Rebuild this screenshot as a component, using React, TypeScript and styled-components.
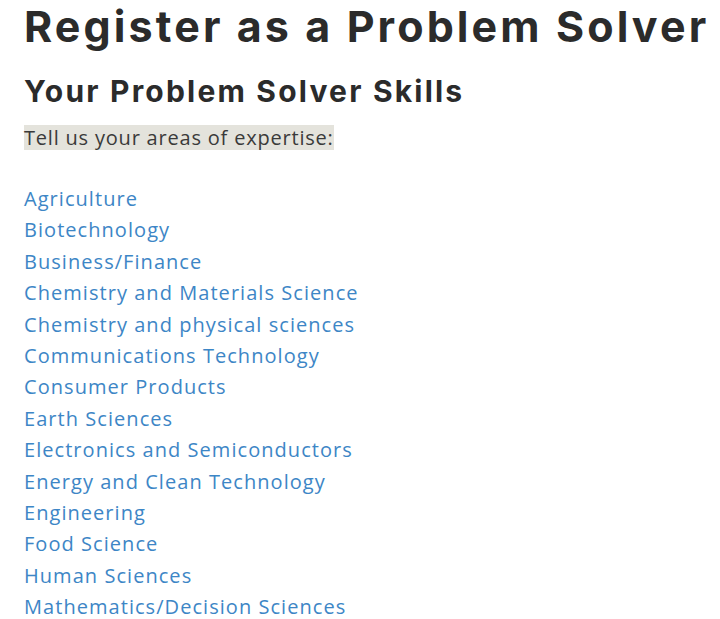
import styled, { createGlobalStyle } from "styled-components";

const GlobalStyle = createGlobalStyle`
  html, body {
    margin: 0;
    padding: 0;
    background: #ffffff;
  }
`;

const Page = styled.div`
  padding: 0 0 0 24px;
  font-family: "Open Sans", "Liberation Sans", sans-serif;
`;

const Title = styled.h1`
  margin: 0;
  font-family: Inter, "Liberation Sans", sans-serif;
  font-weight: 700;
  font-size: 43px;
  line-height: 52px;
  letter-spacing: 3.1px;
  color: #2b2b2b;
  white-space: nowrap;
`;

const SubTitle = styled.h2`
  margin: 21px 0 0;
  font-family: Inter, "Liberation Sans", sans-serif;
  font-weight: 700;
  font-size: 30px;
  line-height: 36px;
  letter-spacing: 2.2px;
  color: #2b2b2b;
`;

const Intro = styled.p`
  width: fit-content;
  margin: 16px 0 0;
  font-size: 20px;
  line-height: 25px;
  letter-spacing: 0.8px;
  background: #e4e3dc;
  color: #3a3a3a;
`;

const SkillList = styled.ul`
  list-style: none;
  margin: 33px 0 0;
  padding: 0;
`;

const SkillItem = styled.li`
  font-size: 20px;
  line-height: 31.4px;
  letter-spacing: 1.05px;
  color: #3d86c6;
`;

const skills = [
  "Agriculture",
  "Biotechnology",
  "Business/Finance",
  "Chemistry and Materials Science",
  "Chemistry and physical sciences",
  "Communications Technology",
  "Consumer Products",
  "Earth Sciences",
  "Electronics and Semiconductors",
  "Energy and Clean Technology",
  "Engineering",
  "Food Science",
  "Human Sciences",
  "Mathematics/Decision Sciences",
];

export default function App() {
  return (
    <>
      <GlobalStyle />
      <Page>
        <Title>Register as a Problem Solver</Title>
        <SubTitle>Your Problem Solver Skills</SubTitle>
        <Intro>Tell us your areas of expertise:</Intro>
        <SkillList>
          {skills.map((skill) => (
            <SkillItem key={skill}>{skill}</SkillItem>
          ))}
        </SkillList>
      </Page>
    </>
  );
}
